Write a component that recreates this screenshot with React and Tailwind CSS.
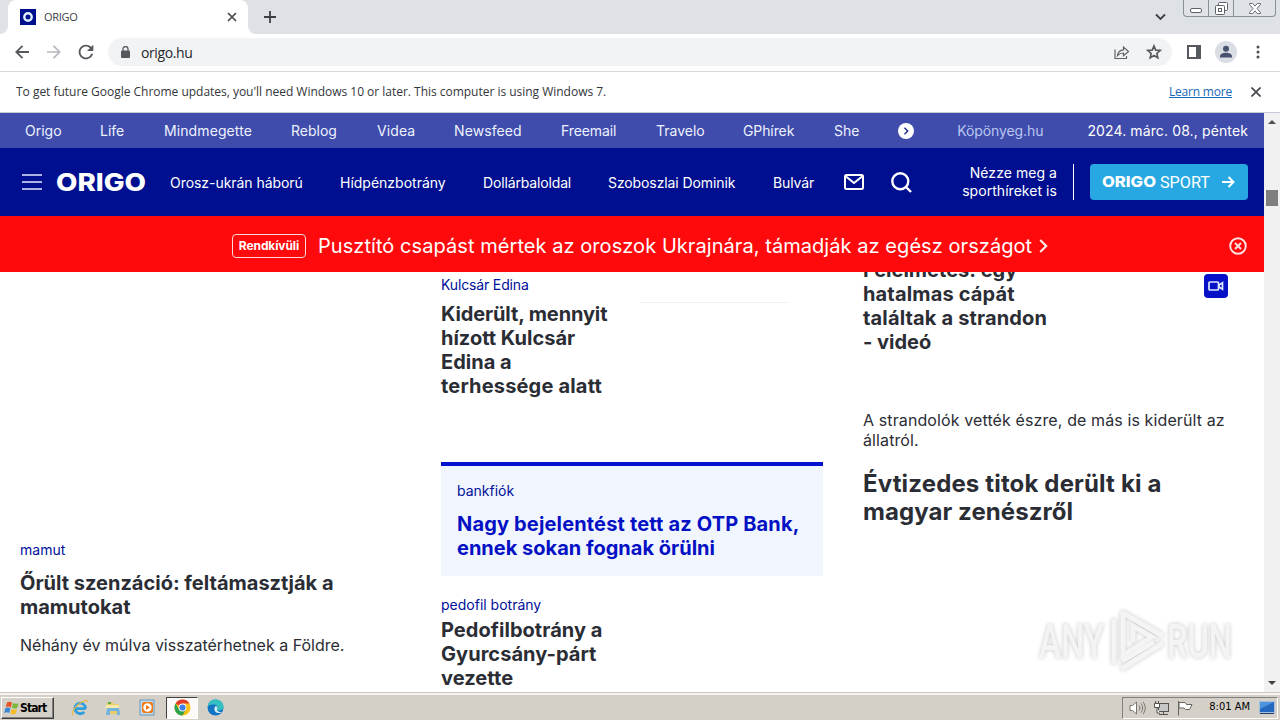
import React from 'react';

const topLinks = [
  { label: 'Origo', width: 'w-9' },
  { label: 'Life', width: 'w-[25px]' },
  { label: 'Mindmegette', width: 'w-[88px] tracking-[0.1px]' },
  { label: 'Reblog', width: 'w-[47px]' },
  { label: 'Videa', width: 'w-[38px] tracking-[0.1px]' },
  { label: 'Newsfeed', width: 'w-[68px] tracking-[0.1px]' },
  { label: 'Freemail', width: 'w-[56px] tracking-[-0.1px]' },
  { label: 'Travelo', width: 'w-[48px]' },
  { label: 'GPhírek', width: 'w-[52px] tracking-[-0.1px]' },
  { label: 'She', width: 'w-[25px]' },
];

const mainLinks = [
  { label: 'Orosz-ukrán háború', width: 'w-[133px] tracking-[-0.05px]' },
  { label: 'Hídpénzbotrány', width: 'w-[106px]' },
  { label: 'Dollárbaloldal', width: 'w-[88px] tracking-[-0.15px]' },
  { label: 'Szoboszlai Dominik', width: 'w-[128px] tracking-[-0.1px]' },
  { label: 'Bulvár', width: 'w-[41px] tracking-[-0.1px]' },
];

function TabStrip() {
  return (
    <div className="flex h-[34px] bg-[#dee1e6]">
      <div className="flex h-full w-2 bg-white">
        <div className="w-full rounded-br-lg bg-[#dee1e6]" />
      </div>
      <div className="flex h-full w-[240px] items-center rounded-t-lg bg-white pl-3">
        <svg width="16" height="16" viewBox="0 0 16 16">
          <rect width="16" height="16" fill="#00108c" />
          <circle cx="8" cy="8" r="3.7" fill="none" stroke="#dff0ff" strokeWidth="2.4" />
        </svg>
        <span className="ml-2 w-[183px] text-[11px] tracking-[-0.3px] text-[#3c4043]">ORIGO</span>
        <svg width="10" height="10" viewBox="0 0 10 10" stroke="#45494d" strokeWidth="1.7">
          <path d="M1 1l8 8M9 1L1 9" />
        </svg>
      </div>
      <div className="flex h-full w-2 bg-white">
        <div className="w-full rounded-bl-lg bg-[#dee1e6]" />
      </div>
      <svg className="ml-[8px] mt-[11px]" width="12" height="12" viewBox="0 0 12 12" stroke="#3c4043" strokeWidth="1.8">
        <path d="M6 0v12M0 6h12" />
      </svg>
      <svg className="ml-auto mr-[17px] mt-[13px]" width="11" height="8" viewBox="0 0 11 8" fill="none" stroke="#3c4043" strokeWidth="1.8">
        <path d="M1 1.5l4.5 4.5L10 1.5" />
      </svg>
      <div className="mr-1 flex h-[17px] w-[93px] rounded-b-[4px] border border-t-0 border-[#8b8f96] bg-[#dfe2e7]">
        <div className="flex w-[25px] items-center justify-center border-r border-[#8b8f96] pt-1">
          <svg width="12" height="5" viewBox="0 0 12 5">
            <rect x="0.5" y="0.5" width="11" height="4" rx="1.5" fill="#fff" stroke="#5c6068" />
          </svg>
        </div>
        <div className="flex w-[25px] items-center justify-center border-r border-[#8b8f96]">
          <svg width="13" height="13" viewBox="0 0 13 13" fill="#fff" stroke="#5c6068">
            <rect x="3.5" y="0.5" width="9" height="8" rx="1" />
            <rect x="0.5" y="3.5" width="9" height="9" rx="1" />
            <rect x="3.5" y="6.5" width="3" height="3" />
          </svg>
        </div>
        <div className="flex flex-1 items-center justify-center">
          <svg width="12" height="11" viewBox="0 0 12 11" fill="#fff" stroke="#5c6068" strokeWidth="0.9">
            <path d="M.5.5h3.200l2.300 2.600L8.300.5h3.200v1L8 5.500l3.500 4v1H8.300L6 7.900l-2.300 2.600H.5v-1L4 5.500l-3.500-4z" />
          </svg>
        </div>
      </div>
    </div>
  );
}

function Toolbar() {
  return (
    <div className="flex h-[38px] items-center border-b border-[#d5d7da] bg-white pb-px pl-[15px]">
      <svg width="14" height="14" viewBox="0 0 14 14" fill="none" stroke="#55595e" strokeWidth="1.8">
        <path d="M14 7H1.500M7.500.8L1.300 7l6.200 6.200" />
      </svg>
      <svg className="ml-[18px]" width="14" height="14" viewBox="0 0 14 14" fill="none" stroke="#b5b8bc" strokeWidth="1.700">
        <path d="M0 7h12.500M6.500.8L12.700 7l-6.200 6.200" />
      </svg>
      <svg className="ml-[14px]" width="22" height="22" viewBox="0 0 24 24" fill="#55595e">
        <path d="M17.650 6.350A7.958 7.958 0 0 0 12 4c-4.420 0-7.990 3.580-7.990 8s3.570 8 7.990 8c3.730 0 6.840-2.550 7.730-6h-2.080A5.990 5.990 0 0 1 12 18c-3.310 0-6-2.690-6-6s2.690-6 6-6c1.660 0 3.140.69 4.220 1.780L13 11h7V4l-2.350 2.350z" />
      </svg>
      <div className="ml-[11px] flex h-7 w-[1064px] items-center rounded-full bg-[#f1f3f4] pl-[13px]">
        <svg width="9" height="12" viewBox="0 0 9 12">
          <rect y="4.500" width="9" height="7.500" rx="1" fill="#55595e" />
          <path d="M2 5V3a2.500 2.500 0 0 1 5 0v2" fill="none" stroke="#55595e" strokeWidth="1.300" />
        </svg>
        <span className="ml-[11px] text-[14px] tracking-[-0.4px] text-[#26282b]">origo.hu</span>
        <svg className="ml-auto" width="16" height="15" viewBox="0 0 16 15" fill="none" stroke="#5f6368" strokeWidth="1.200">
          <path d="M1 4.500v9h11.500V11" />
          <path d="M3.500 10.500c.5-3.500 2.700-5.300 6-5.600V2l5 4.500-5 4.300V8c-2.500 0-4.500.8-6 2.500z" />
        </svg>
        <svg className="ml-[15px] mr-[9px]" width="18" height="18" viewBox="0 0 24 24" fill="none" stroke="#55595e" strokeWidth="2.200">
          <path d="M12 4l2.300 5.500 6 .5-4.500 4 1.300 5.800-5.100-3.100-5.100 3.100 1.300-5.800-4.500-4 6-.5z" />
        </svg>
      </div>
      <svg className="ml-[15px]" width="14" height="14" viewBox="0 0 14 14">
        <path d="M0 0h14v14H0zM2 2v10h7V2z" fill="#55595e" fillRule="evenodd" />
      </svg>
      <svg className="ml-[14px]" width="22" height="22" viewBox="0 0 22 22">
        <circle cx="11" cy="11" r="11" fill="#dadde3" />
        <circle cx="11" cy="7.800" r="3" fill="#47536f" />
        <path d="M5 16.500v-1.200c0-2.400 3.500-3.500 6-3.500s6 1.100 6 3.500v1.200z" fill="#47536f" />
      </svg>
      <svg className="ml-[19px]" width="4" height="14" viewBox="0 0 4 14" fill="#4a4d52">
        <circle cx="2" cy="2" r="1.500" />
        <circle cx="2" cy="7" r="1.500" />
        <circle cx="2" cy="12" r="1.500" />
      </svg>
    </div>
  );
}

function InfoBar() {
  return (
    <div className="flex h-[41px] items-center border-b border-[#c5cad6] bg-white pl-4 pr-[19px] text-[12px] text-[#33363a]">
      <span className="whitespace-nowrap tracking-[-0.02px]">
        To get future Google Chrome updates, you'll need Windows 10 or later. This computer is using Windows 7.
      </span>
      <span className="ml-auto whitespace-nowrap tracking-[-0.2px] text-[#1967b8] underline">Learn more</span>
      <svg className="ml-[19px]" width="10" height="10" viewBox="0 0 10 10" stroke="#45494d" strokeWidth="1.700">
        <path d="M.5.5l9 9M9.500.5l-9 9" />
      </svg>
    </div>
  );
}

function SiteHeader() {
  return (
    <header className="text-[14px] text-white">
      <div className="flex h-[35px] items-center bg-[#3f4cab] pl-[25px] pr-4">
        <nav className="flex gap-[39px] whitespace-nowrap text-[#edf2ff]">
          {topLinks.map((link) => (
            <a key={link.label} className={link.width}>
              {link.label}
            </a>
          ))}
        </nav>
        <svg className="ml-[39px]" width="16" height="16" viewBox="0 0 16 16" fill="none">
          <circle cx="8" cy="8" r="8" fill="#fff" />
          <path d="M6.500 4.800L9.700 8l-3.200 3.200" stroke="#1c2a8c" strokeWidth="1.400" />
        </svg>
        <span className="ml-auto tracking-[-0.1px] text-[#b9c6f2]">Köpönyeg.hu</span>
        <span className="ml-[44px] whitespace-nowrap tracking-[0.12px]">2024. márc. 08., péntek</span>
      </div>
      <div className="flex h-[68px] items-center bg-[#000f90] pl-[22px] pr-4">
        <svg width="20" height="16" viewBox="0 0 20 16" stroke="#e4eaff" strokeWidth="1.400">
          <path d="M0 1h20M0 8h20M0 15h20" />
        </svg>
        <svg className="ml-[14px] overflow-visible" width="90" height="24" viewBox="0 0 90 24">
          <text x="0" y="20.500" textLength="90" lengthAdjust="spacingAndGlyphs" fill="#fff" fontFamily="Inter, sans-serif" fontWeight="800" fontSize="24">
            ORIGO
          </text>
        </svg>
        <nav className="ml-6 flex gap-[37px] whitespace-nowrap pt-px">
          {mainLinks.map((link) => (
            <a key={link.label} className={link.width}>
              {link.label}
            </a>
          ))}
        </nav>
        <svg className="ml-[30px]" width="20" height="16" viewBox="0 0 20 16" fill="none" stroke="#fff" strokeWidth="2">
          <rect x="1" y="1" width="18" height="14" rx="1.500" />
          <path d="M2 2.500l8 6.500 8-6.500" />
        </svg>
        <svg className="ml-[27px]" width="21" height="21" viewBox="0 0 21 21" fill="none" stroke="#fff" strokeWidth="2.400">
          <circle cx="9.300" cy="9.300" r="8" />
          <path d="M15 15l5 5" />
        </svg>
        <div className="ml-auto border-r border-white pr-4 text-right leading-[18px] tracking-[0.05px]">
          Nézze meg a
          <br />
          sporthíreket is
        </div>
        <div className="ml-4 flex h-9 w-[158px] items-center rounded bg-[#28a8e3] pl-3">
          <svg className="overflow-visible" width="136" height="20" viewBox="0 0 136 20" fill="#fff">
            <text x="0" y="14.800" textLength="54" lengthAdjust="spacingAndGlyphs" fontFamily="Inter, sans-serif" fontWeight="800" fontSize="14.500">
              ORIGO
            </text>
            <text x="58" y="15.500" textLength="50" lengthAdjust="spacingAndGlyphs" fontFamily="Roboto, sans-serif" fontWeight="400" fontSize="16.500">
              SPORT
            </text>
            <path d="M120 10h11M126.500 5l5 5-5 5" fill="none" stroke="#fff" strokeWidth="2" />
          </svg>
        </div>
      </div>
      <div className="flex h-14 items-center bg-[#ff0a0c] pl-[232px] pr-[17px] pt-[3px]">
        <span className="flex h-6 w-[74px] items-center justify-center rounded border border-[#ffd9d9] text-[12px] font-bold tracking-[-0.1px]">
          Rendkívüli
        </span>
        <span className="ml-3 whitespace-nowrap text-[20px] tracking-[0.06px]">
          Pusztító csapást mértek az oroszok Ukrajnára, támadják az egész országot
        </span>
        <svg className="ml-[7px]" width="9" height="14" viewBox="0 0 9 14" fill="none" stroke="#ffe9e9" strokeWidth="2.200">
          <path d="M1.200 1l6 6-6 6" />
        </svg>
        <svg className="ml-auto" width="18" height="18" viewBox="0 0 18 18" fill="none" stroke="#ffe4e4" strokeWidth="1.900">
          <circle cx="9" cy="9" r="7.800" />
          <path d="M6 6l6 6M12 6l-6 6" />
        </svg>
      </div>
    </header>
  );
}

function News() {
  return (
    <main className="flex min-h-0 flex-1 overflow-hidden pl-5 text-[#2b2d35]">
      <div className="w-[382px]">
        <p className="pt-[268px] text-[14px] leading-5 text-[#00109a]">mamut</p>
        <h2 className="mt-[11px] w-[330px] text-[20px] font-bold leading-6">Őrült szenzáció: feltámasztják a mamutokat</h2>
        <p className="mt-4 text-[16px] leading-5">Néhány év múlva visszatérhetnek a Földre.</p>
      </div>

      <div className="ml-[39px] w-[382px]">
        <div className="flex h-[190px] pt-[3px]">
          <div className="w-[180px]">
            <p className="text-[14px] leading-5 tracking-[-0.15px] text-[#00109a]">Kulcsár Edina</p>
            <h2 className="mt-[7px] text-[20px] font-bold leading-6">
              <span className="tracking-[-0.12px]">Kiderült, mennyit</span> hízott Kulcsár Edina a{' '}
              <span className="tracking-[0.18px]">terhessége alatt</span>
            </h2>
          </div>
          <div className="ml-5 mt-[27px] h-px w-[148px] bg-[#f1f1f1]" />
        </div>
        <div className="h-[114px] border-t-4 border-[#0410d0] bg-[#f1f6fe] px-4 pt-[15px]">
          <p className="text-[14px] leading-5 text-[#00109a]">bankfiók</p>
          <h2 className="mt-[11px] whitespace-nowrap text-[20px] font-bold leading-6 text-[#0410c4]">
            <span className="tracking-[0.16px]">Nagy bejelentést tett az OTP Bank,</span>
            <br />
            ennek sokan fognak örülni
          </h2>
        </div>
        <p className="mt-[19px] text-[14px] leading-5 text-[#00109a]">pedofil botrány</p>
        <h2 className="mt-[3px] w-[180px] text-[20px] font-bold leading-6 tracking-[0.05px]">
          Pedofilbotrány a Gyurcsány-párt vezette
        </h2>
      </div>

      <div className="ml-10 w-[382px]">
        <div className="flex">
          <h2 className="-mt-[14px] w-[190px] text-[20px] font-bold leading-6">
            Félelmetes: egy <span className="tracking-[0.15px]">hatalmas cápát találtak a strandon</span> - videó
          </h2>
          <div className="ml-[151px] mt-[2px] flex h-6 w-6 items-center justify-center rounded bg-[#0610c6]">
            <svg width="16" height="10" viewBox="0 0 16 10" fill="none" stroke="#dfe8ff" strokeWidth="1.700">
              <rect x="1" y="1" width="9.500" height="8" rx="1" />
              <path d="M11 4l3.500-2.200v6.400L11 6z" />
            </svg>
          </div>
        </div>
        <p className="mt-14 whitespace-nowrap text-[16px] leading-5 tracking-[0.11px]">
          A strandolók vették észre, de más is kiderült az
          <br />
          állatról.
        </p>
        <h2 className="mt-5 whitespace-nowrap text-[24px] font-bold leading-7">
          <span className="tracking-[0.15px]">Évtizedes titok derült ki a</span>
          <br />
          <span className="tracking-[0.07px]">magyar zenészről</span>
        </h2>
      </div>
    </main>
  );
}

function Scrollbar() {
  return (
    <div className="flex w-4 flex-col items-center bg-[#f1f1f1] py-[7px]">
      <svg width="8" height="4" viewBox="0 0 8 4" fill="#505050">
        <path d="M4 0l4 4H0z" />
      </svg>
      <div className="mt-[66px] h-4 w-3 bg-[#7f7f7f]" />
      <svg className="mt-auto" width="8" height="4" viewBox="0 0 8 4" fill="#404040">
        <path d="M0 0h8L4 4z" />
      </svg>
    </div>
  );
}

function Watermark() {
  return (
    <svg
      className="absolute left-[1032px] top-[602px] overflow-visible drop-shadow-[0_0_2px_rgba(0,0,0,0.22)]"
      width="208"
      height="76"
      viewBox="0 0 208 76"
      fill="#f4f4f4"
    >
      <text x="7" y="56" textLength="65" lengthAdjust="spacingAndGlyphs" fontFamily="Roboto, sans-serif" fontWeight="500" fontSize="48">
        ANY
      </text>
      <text x="135" y="56" textLength="65" lengthAdjust="spacingAndGlyphs" fontFamily="Roboto, sans-serif" fontWeight="500" fontSize="48">
        RUN
      </text>
      <g fill="none" stroke="#f4f4f4" strokeWidth="5">
        <path d="M91 11l40 23M91 9v44l29-18-19-11v16" />
        <path d="M82 17v45M89 67l42-26M90 59l32-19" />
      </g>
    </svg>
  );
}

function Taskbar() {
  return (
    <footer className="flex h-7 items-center border-t border-[#c9c8c0] bg-[#d4d0c8] pl-px pr-[2px] pt-[2px] shadow-[inset_0_2px_0_#f5f4ef]">
      <div className="flex h-[22px] w-[53px] items-center border border-b-[#404040] border-l-white border-r-[#404040] border-t-white pl-[2px] shadow-[inset_-1px_-1px_0_#808080]">
        <svg width="16" height="16" viewBox="0 0 16 16">
          <path d="M3 2.500c2-1.200 3.300-1 5 .1L6.800 7.400C5.200 6.300 3.500 6.300 1.700 7z" fill="#e65325" />
          <path d="M9 3c2 1 3.500 1 5.500.2L13.200 8c-2 .9-3.700.8-5.300-.2z" fill="#7cb83a" />
          <path d="M1.400 8.200c1.900-.8 3.500-.8 5.100.2l-1.300 4.700c-1.600-1-3.200-1-5.100-.2z" fill="#3a86d4" />
          <path d="M7.500 8.900c1.800 1 3.500 1 5.400.2l-1.300 4.700c-2 .9-3.700.8-5.300-.2z" fill="#f6bd28" />
        </svg>
        <span className="text-[12px] font-bold tracking-[-0.9px] text-black [font-family:'DejaVu_Sans_Condensed','DejaVu_Sans',sans-serif] [font-stretch:condensed]">
          Start
        </span>
      </div>

      <svg className="ml-[17px]" width="18" height="18" viewBox="0 0 18 18" fill="none">
        <path d="M14.500 9.600H5M14.500 9.600a5.300 5.300 0 1 0-1.200 3.200" stroke="#2f9fdc" strokeWidth="2.800" />
        <path d="M2.500 16c-3-1.300 1-8 6-11.500 4-2.800 8-4 8-1.500" stroke="#e8b93c" strokeWidth="1.200" />
      </svg>
      <svg className="ml-[15px]" width="18" height="18" viewBox="0 0 18 18">
        <path d="M3 3h6l1 2h5v10H3z" fill="#e9cc6a" />
        <path d="M2 6h13v4H2z" fill="#f8eaaa" />
        <path d="M2 16l1-7h12l1 7h-3v-4H6v4z" fill="#6fb5df" />
        <path d="M4 3h3v2H4z" fill="#5cab52" />
      </svg>
      <svg className="ml-[17px]" width="17" height="17" viewBox="0 0 17 17">
        <rect x="1" y="1" width="14" height="15" fill="#bfdcf0" stroke="#6697bd" />
        <rect x="3" y="3" width="11" height="11" rx="2" fill="#f07a16" />
        <circle cx="8.500" cy="8.500" r="4.200" fill="#fff" />
        <path d="M7 6v5l4-2.500z" fill="#f07a16" />
      </svg>
      <div className="ml-[10px] flex h-[22px] w-[32px] items-center justify-center border border-b-white border-l-[#404040] border-r-white border-t-[#404040] bg-[#fbfaf8]">
        <svg width="17" height="17" viewBox="0 0 16 16">
          <circle cx="8" cy="8" r="7.500" fill="#fbc116" />
          <path d="M8 8L1.500 4.250A7.500 7.500 0 0 1 14.500 4.250H8z" fill="#e33b2e" />
          <path d="M1.500 4.250A7.500 7.500 0 0 0 8 15.500l3.250-5.600L8 8 4.750 9.900z" fill="#2da14c" />
          <circle cx="8" cy="8" r="3.700" fill="#fff" />
          <circle cx="8" cy="8" r="2.900" fill="#3f7fe8" />
        </svg>
      </div>
      <svg className="ml-[9px]" width="17" height="17" viewBox="0 0 16 16">
        <circle cx="8" cy="8" r="7.500" fill="#1372c4" />
        <path d="M.7 7C1.200 3 4.300.5 8.200.5c4.400 0 7.300 3 7.300 6.500 0 2.500-1.800 3.900-4.300 3.900-1.500 0-2.200-.6-1.700-1.300.9-1.300.2-3.900-2.500-4.400C4.300 4.800 2 5.500.7 7z" fill="#36bfc0" />
        <path d="M8.300 6.500c-2.300 1.800-1.600 5.600 1.500 6.500 1.600.5 3.400.2 4.500-.9-1.300.3-2.600.2-3.500-.4-1.500-.8-2-1.900-1-3C10 8 9.500 7 8.300 6.500z" fill="#d5edf5" />
      </svg>

      <div className="ml-auto flex h-[22px] w-[156px] items-center border border-b-white border-l-[#808080] border-r-white border-t-[#808080] pl-[6px]">
        <svg width="17" height="16" viewBox="0 0 17 16" fill="none" stroke="#77756f">
          <path d="M1 5.500h2.500l4-3.500v12l-4-3.500H1z" fill="#fff" />
          <path d="M10 5.500c1.200 1.500 1.200 3.500 0 5M12 3.500c2.200 2.700 2.200 6.300 0 9M14 2c3 3.700 3 8.300 0 12" />
        </svg>
        <svg className="ml-[7px]" width="17" height="16" viewBox="0 0 17 16" stroke="#55534e">
          <rect x="5.500" y="3.500" width="10" height="8" fill="#c7c7c7" />
          <path d="M6 14.500h9M10.500 12v2" fill="none" />
          <path d="M1.500 3.500h5v4h-5zM2.500 1v2M5.500 1v2M4 8v5h3" fill="#fff" />
        </svg>
        <svg className="ml-[7px]" width="16" height="16" viewBox="0 0 16 16" fill="#fff" stroke="#66645f">
          <path d="M1.500 1v14.500" />
          <path d="M2 2.500h6l1.500 2h5.500L12.500 9.500H8.500L7 8H2z" />
        </svg>
        <span className="ml-auto whitespace-nowrap text-[11px] text-black [font-family:'DejaVu_Sans_Condensed','DejaVu_Sans',sans-serif] [font-stretch:condensed]">
          8:01 AM
        </span>
        <svg className="ml-[9px] mr-[2px]" width="16" height="14" viewBox="0 0 16 14">
          <rect x="0.500" y="0.500" width="15" height="11" fill="#2467be" stroke="#a5bedb" />
          <path d="M1 1h14L1 8z" fill="#4d94df" />
          <path d="M1 12.500h14" stroke="#213d68" />
        </svg>
      </div>
    </footer>
  );
}

export default function App() {
  return (
    <div className="relative flex h-[720px] w-[1280px] flex-col overflow-hidden bg-white [font-family:'Open_Sans','Noto_Sans',sans-serif]">
      <TabStrip />
      <Toolbar />
      <InfoBar />
      <div className="flex min-h-0 flex-1">
        <div className="flex w-[1264px] flex-col [font-family:Inter,sans-serif]">
          <SiteHeader />
          <News />
        </div>
        <Scrollbar />
      </div>
      <Taskbar />
      <Watermark />
    </div>
  );
}
